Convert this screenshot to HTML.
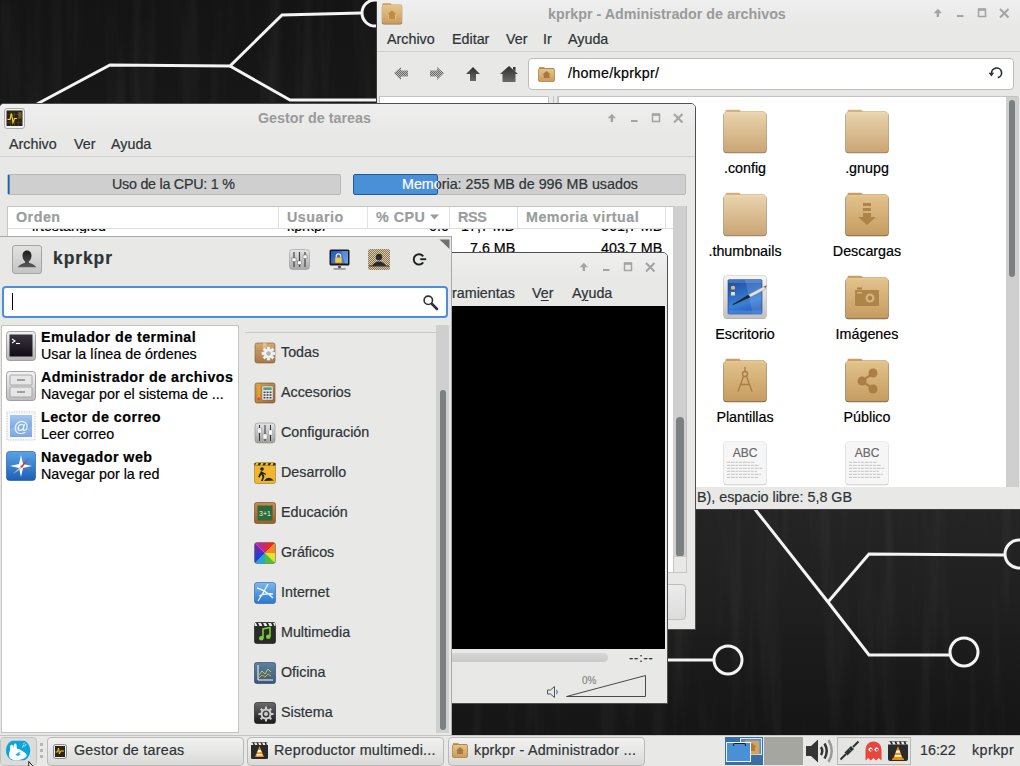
<!DOCTYPE html>
<html><head><meta charset="utf-8">
<style>
*{margin:0;padding:0;box-sizing:border-box}
html,body{width:1020px;height:766px;overflow:hidden;background:#1a1a1a}
body{position:relative;font-family:"Liberation Sans",sans-serif;font-size:14px;color:#2e3436}
.a{position:absolute}
.g{position:absolute;left:0;top:0;width:0;height:0}
.t{position:absolute;white-space:nowrap;line-height:1;-webkit-text-stroke:0.2px currentColor}
.ttl{position:absolute;font-weight:bold;color:#9a9a9a;font-size:14.3px;white-space:nowrap;line-height:1}
.menu{font-size:14.3px;color:#2e3436}
.th{font-size:14.3px;font-weight:bold;color:#9a9d9d;letter-spacing:0.5px}
.tb{background:linear-gradient(#f2f2f1,#dadad9);border:1px solid #b9b9b7;border-radius:4px}
.fl{font-size:14.3px;color:#000;transform:translateX(-50%)}
</style></head><body>
<!-- desktop background -->
<div class="a" style="left:0;top:0;width:1020px;height:766px;background:linear-gradient(180deg,#141414 0px,#171717 100px,#1e1e1e 300px,#242424 510px,#202020 600px,#181818 690px,#141414 766px)"></div>
<svg class="a" style="left:0;top:0" width="1020" height="766">
<filter id="wood" x="0" y="0" width="100%" height="100%"><feTurbulence type="fractalNoise" baseFrequency="0.06 0.004" numOctaves="3" seed="7"/><feColorMatrix type="matrix" values="0 0 0 0 1  0 0 0 0 1  0 0 0 0 1  1.2 0 0 0 -0.55"/></filter>
<rect width="1020" height="766" filter="url(#wood)" opacity="0.09"/>
</svg>
<svg class="a" style="left:0;top:0" width="1020" height="766">
<g fill="none" stroke="#f4f4f4" stroke-width="3">
<polyline points="37,104 110,65 230,66 282,15 361,13"/>
<polyline points="230,66 290,100 378,100"/>
<circle cx="375" cy="13" r="13"/>
<polyline points="754,508 828,602 869,655 950,655"/>
<polyline points="828,602 869,554 1005,555"/>
<circle cx="964" cy="652" r="14"/>
<circle cx="1019" cy="554" r="14"/>
<polyline points="660,660 714,660"/>
<circle cx="728" cy="660" r="14"/>
</g>
</svg>
<!-- THUNAR -->
<div class="g" id="thunar">
<div class="a" style="left:376px;top:-1px;width:646px;height:511px;background:#e8e8e7;border:1px solid #3c3c3c;border-radius:5px 5px 0 0"></div>
<div class="a" style="left:377px;top:0;width:644px;height:26px;background:linear-gradient(#efefef,#e8e8e7)"></div>
<svg class="a" style="left:381px;top:2px" width="22" height="23" viewBox="0 0 22 23">
 <defs><linearGradient id="hf" x1="0" y1="0" x2="0" y2="1"><stop offset="0" stop-color="#e4c690"/><stop offset="1" stop-color="#c99c58"/></linearGradient></defs>
 <path d="M1.5 2.2q0-1 1-1h7l1.2 1.2h8.8q1 0 1 1v3h-19z" fill="#c89a56"/>
 <rect x="0.8" y="3" width="20.4" height="19.5" rx="2.2" fill="#5e4a30" opacity="0.75"/>
 <rect x="1" y="2.8" width="20" height="19" rx="2" fill="url(#hf)"/>
 <path d="M11 7.2l-5.8 5.2h1.8v5.2h8v-5.2h1.8z" fill="#f0dcb0" opacity="0.6"/>
 <path d="M11 8l-4.8 4.3h1.6v5h6.4v-5h1.6z" fill="#bf8c40"/>
</svg>
<div class="ttl" style="left:548px;top:7px">kprkpr - Administrador de archivos</div>
<svg class="a" style="left:930px;top:6px" width="85" height="14" viewBox="0 0 85 14" fill="none" stroke="#a3a3a3" stroke-width="2">
 <path d="M3.7 7.2L7.85 2.8 12 7.2z" fill="#a3a3a3" stroke="none"/><path d="M7.85 6v5" stroke-width="2.4"/>
 <path d="M27 10h6.5"/>
 <rect x="48.5" y="3.5" width="7" height="7" stroke-width="1.5"/><path d="M48 3.5h8" stroke-width="2.5"/>
 <path d="M70 3l8.5 8.5M78.5 3l-8.5 8.5"/>
</svg>
<div class="t menu" style="left:387px;top:32px">Archivo</div>
<div class="t menu" style="left:452px;top:32px">Editar</div>
<div class="t menu" style="left:506px;top:32px">Ver</div>
<div class="t menu" style="left:543px;top:32px">Ir</div>
<div class="t menu" style="left:568px;top:32px">Ayuda</div>
<div class="a" style="left:377px;top:51px;width:644px;height:1px;background:#d0d0ce"></div>
<svg class="a" style="left:392px;top:64px" width="130" height="20" viewBox="0 0 130 20">
 <defs>
  <pattern id="dith" width="2" height="2" patternUnits="userSpaceOnUse"><rect width="1" height="1" fill="#6e6e6e"/><rect x="1" y="1" width="1" height="1" fill="#6e6e6e"/><rect x="1" width="1" height="1" fill="#b8b8b8"/><rect y="1" width="1" height="1" fill="#b8b8b8"/></pattern>
  <linearGradient id="dk" x1="0" y1="0" x2="0" y2="1"><stop offset="0" stop-color="#2e2e2e"/><stop offset="1" stop-color="#6a6a6a"/></linearGradient>
 </defs>
 <path d="M2 9l7-6v3.5h7v6h-7v3.5z" fill="url(#dith)"/>
 <path d="M52 9l-7-6v3.5h-7v6h7v3.5z" fill="url(#dith)"/>
 <path d="M81 3l7 7h-4v7h-6v-7h-4z" fill="url(#dk)"/>
 <path d="M117 2l9 8h-2.5v8h-13v-8h-2.5zM121 3h2.5v4.5l-2.5-2.2z" fill="url(#dk)"/>
</svg>
<div class="a" style="left:528px;top:58px;width:486px;height:32px;background:#fff;border:1px solid #c0bdb8;border-radius:4px"></div>
<svg class="a" style="left:538px;top:66px" width="17" height="16" viewBox="0 0 17 16">
 <path d="M1 1h5l1 1h9v13h-15z" fill="#c79a5c"/>
 <rect x="0.5" y="2.5" width="16" height="13" rx="1.5" fill="url(#hf)" stroke="#a8753a" stroke-width="0.7"/>
 <path d="M8.5 5l-4 3.5h1.2v3.5h5.6v-3.5h1.2z" fill="#9a6a2e" opacity="0.8"/>
</svg>
<div class="t" style="left:568px;top:66px;font-size:14.3px;color:#000;letter-spacing:0.3px">/home/kprkpr/</div>
<svg class="a" style="left:988px;top:66px" width="16" height="16" viewBox="0 0 16 16">
 <path d="M3.6 7.3A5 4.9 0 1 1 9.8 11.7" fill="none" stroke="#2e3436" stroke-width="1.7"/>
 <path d="M0.6 6.8h5.6l-2.8 3.6z" fill="#2e3436"/>
</svg>
<!-- sidebar & icon view -->
<div class="a" style="left:379px;top:96px;width:170px;height:420px;background:#fff;border:1px solid #c6c3bf"></div>
<div class="a" style="left:553px;top:96px;width:1px;height:391px;background:#c6c3bf"></div>
<div class="a" style="left:557px;top:96px;width:1px;height:391px;background:#c6c3bf"></div>
<div class="a" style="left:558px;top:96px;width:460px;height:392px;background:#fff;border:1px solid #c6c3bf"></div>
<div class="a" style="left:1006px;top:97px;width:13px;height:390px;background:#cfcfcf"></div>
<div class="a" style="left:1009px;top:100px;width:6px;height:177px;background:#7d8080;border-radius:4px"></div>
<svg class="a" style="left:0;top:0;width:0;height:0">
 <defs>
  <linearGradient id="fg" x1="0" y1="0" x2="0" y2="1"><stop offset="0" stop-color="#e9d4ad"/><stop offset="1" stop-color="#caa574"/></linearGradient>
  <linearGradient id="fg2" x1="0" y1="0" x2="0" y2="1"><stop offset="0" stop-color="#e2c28c"/><stop offset="1" stop-color="#c59c60"/></linearGradient>
  <symbol id="fold" viewBox="0 0 46 46">
   <path d="M3.5 3q0-1.3 1.3-1.3h12.5l1.5 1.5h22.5q1.3 0 1.3 1.3v5h-39z" fill="#d4b27c"/>
   <rect x="1.2" y="4.2" width="43.6" height="41" rx="3.5" fill="#6e5a40" opacity="0.75"/>
   <rect x="1.6" y="4" width="42.8" height="40.3" rx="3.2" fill="url(#fg)"/>
   <path d="M4 5h38" stroke="#f2e4c8" stroke-width="0.8" opacity="0.7"/>
  </symbol>
  <symbol id="fold2" viewBox="0 0 46 46">
   <path d="M3.5 3q0-1.3 1.3-1.3h12.5l1.5 1.5h22.5q1.3 0 1.3 1.3v5h-39z" fill="#c9a062"/>
   <rect x="1.2" y="4.2" width="43.6" height="41" rx="3.5" fill="#5e4628" opacity="0.8"/>
   <rect x="1.6" y="4" width="42.8" height="40.3" rx="3.2" fill="url(#fg2)"/>
   <path d="M4 5h38" stroke="#ecd3a8" stroke-width="0.8" opacity="0.7"/>
  </symbol>
  <symbol id="abc" viewBox="0 0 46 46">
   <rect x="1.5" y="2.3" width="43" height="43" rx="3.5" fill="#8a8a8a" opacity="0.6"/>
   <rect x="1.5" y="1.5" width="43" height="43" rx="3.5" fill="#f6f6f6" stroke="#e0e0e0" stroke-width="0.5"/>
   <text x="23" y="16.5" font-family="Liberation Sans" font-size="12" fill="#6a6a6a" text-anchor="middle" stroke="#6a6a6a" stroke-width="0.2">ABC</text>
   <g stroke="#bdbdbd" stroke-width="0.9" stroke-dasharray="3 0.8 4 0.8 2.5 0.8">
    <path d="M5 22.3h28M5 25.3h32M5 28.3h36M5 31.3h30M5 34.3h34M5 37.4h31"/>
   </g>
  </symbol>
 </defs>
</svg>
<!-- row 1 -->
<svg class="a" style="left:722px;top:108px" width="46" height="46"><use href="#fold"/></svg>
<svg class="a" style="left:844px;top:108px" width="46" height="46"><use href="#fold"/></svg>
<div class="t fl" style="left:745px;top:161px">.config</div>
<div class="t fl" style="left:867px;top:161px">.gnupg</div>
<!-- row 2 -->
<svg class="a" style="left:722px;top:191px" width="46" height="46"><use href="#fold"/></svg>
<svg class="a" style="left:844px;top:191px" width="46" height="46"><use href="#fold2"/>
 <g fill="#a97f45" opacity="0.9"><rect x="19" y="12" width="8" height="3"/><rect x="19" y="17" width="8" height="3"/><path d="M19 22h8v4h5l-9 8-9-8h5z"/></g></svg>
<div class="t fl" style="left:745px;top:244px">.thumbnails</div>
<div class="t fl" style="left:867px;top:244px">Descargas</div>
<!-- row 3 -->
<svg class="a" style="left:722px;top:274px" width="48" height="46" viewBox="0 0 48 46">
 <defs><linearGradient id="scr" x1="0" y1="0" x2="0.3" y2="1"><stop offset="0" stop-color="#1d4a9e"/><stop offset="0.75" stop-color="#3a80d8"/><stop offset="1" stop-color="#2a64c0"/></linearGradient>
 <linearGradient id="frm" x1="0" y1="0" x2="0" y2="1"><stop offset="0" stop-color="#f6f6f6"/><stop offset="1" stop-color="#c2c2c2"/></linearGradient></defs>
 <rect x="1.5" y="2" width="43" height="43" rx="3.5" fill="#6a6a6a" opacity="0.55"/>
 <rect x="1.5" y="1.5" width="43" height="42.5" rx="3.5" fill="url(#frm)" stroke="#c8c8c8" stroke-width="0.6"/>
 <rect x="6" y="5.7" width="34" height="34.3" rx="1" fill="url(#scr)" stroke="#1a3f80" stroke-width="0.6"/>
 <rect x="6.3" y="6" width="33.4" height="3" fill="#3c74c8"/>
 <path d="M23 6h16.7v34h-9z" fill="#fff" opacity="0.13"/>
 <rect x="9" y="12" width="4" height="3.5" rx="0.8" fill="#e8b850"/><rect x="9" y="18" width="4" height="3.5" fill="#ddd"/>
 <rect x="6.3" y="36.5" width="33.4" height="3.3" fill="#4a88dc" opacity="0.8"/>
 <path d="M10.5 30.3l16-9.6 2 2.4-17.2 7.8z" fill="#232323"/>
 <path d="M26.5 20.7l15.5-8.2 1.6 2.6-15.1 8z" fill="#e6e6e6" stroke="#888" stroke-width="0.4"/>
 <path d="M42 12.5l2.6-1.3-1 2.8z" fill="#555"/>
</svg>
<svg class="a" style="left:844px;top:274px" width="46" height="46"><use href="#fold2"/>
 <g fill="#a97f45" opacity="0.9"><rect x="11" y="16" width="24" height="16" rx="1"/></g><circle cx="26" cy="24" r="4.5" fill="#d5b27a"/><circle cx="26" cy="24" r="2.2" fill="#a97f45"/><rect x="13" y="13.5" width="5" height="2" fill="#a97f45"/><rect x="13" y="18" width="5" height="1.5" fill="#d5b27a"/></svg>
<div class="t fl" style="left:745px;top:327px">Escritorio</div>
<div class="t fl" style="left:867px;top:327px">Imágenes</div>
<!-- row 4 -->
<svg class="a" style="left:722px;top:357px" width="46" height="46"><use href="#fold2"/>
 <g stroke="#a97f45" stroke-width="1.4" fill="none"><circle cx="23" cy="17" r="2.5"/><path d="M23 10v4.5M21.5 19.5l-5.5 15M24.5 19.5l5.5 15M18 27.5h10"/></g></svg>
<svg class="a" style="left:844px;top:357px" width="46" height="46"><use href="#fold2"/>
 <g fill="#a97f45"><circle cx="29" cy="16" r="4.5"/><circle cx="18" cy="24" r="4.5"/><circle cx="29" cy="32" r="4.5"/><path d="M18 22.5l11-7.5 1 2-11 7.5zM18 25.5l11 7.5 1-2-11-7.5z"/></g></svg>
<div class="t fl" style="left:745px;top:410px">Plantillas</div>
<div class="t fl" style="left:867px;top:410px">Público</div>
<!-- row 5 -->
<svg class="a" style="left:722px;top:440px" width="46" height="46"><use href="#abc"/></svg>
<svg class="a" style="left:844px;top:440px" width="46" height="46"><use href="#abc"/></svg>
<!-- status bar -->
<div class="a" style="left:377px;top:487px;width:644px;height:22px;background:#e8e8e7"></div>
<div class="t" style="left:697px;top:490px;font-size:14.3px;color:#2e3436">B), espacio libre: 5,8 GB</div>
</div>
<!-- TASK MANAGER -->
<div class="g" id="tm">
<div class="a" style="left:-1px;top:103px;width:697px;height:527px;background:#e8e8e7;border:1px solid #4f4f4f;border-radius:5px 5px 0 0"></div>
<div class="a" style="left:0;top:104px;width:695px;height:28px;background:linear-gradient(#efefef,#e8e8e7);border-radius:4px 4px 0 0"></div>
<svg class="a" style="left:4px;top:108px" width="21" height="21" viewBox="0 0 21 21">
 <rect x="0.5" y="0.5" width="20" height="20" rx="2.5" fill="#f2f2f2" stroke="#9a9a9a" stroke-width="0.8"/>
 <rect x="2.5" y="2.5" width="16" height="15.5" fill="#2b2416"/>
 <g stroke="#5a4c2a" stroke-width="0.5"><path d="M2.5 6.5h16M2.5 10.5h16M2.5 14.5h16M6.5 2.5v15.5M10.5 2.5v15.5M14.5 2.5v15.5"/></g>
 <path d="M3.5 11.5h2.5l1.5-6 1.5 9 1.5-4h2.5" fill="none" stroke="#f5d02c" stroke-width="1.2"/>
 <path d="M14.5 5h3M14.5 7h3M14.5 9h3" stroke="#d4b030" stroke-width="0.8"/>
</svg>
<div class="ttl" style="left:258px;top:111px">Gestor de tareas</div>
<svg class="a" style="left:604px;top:111px" width="85" height="14" viewBox="0 0 85 14" fill="none" stroke="#a3a3a3" stroke-width="2">
 <path d="M3.7 7.2L7.85 2.8 12 7.2z" fill="#a3a3a3" stroke="none"/><path d="M7.85 6v5" stroke-width="2.4"/>
 <path d="M27 10h6.5"/>
 <rect x="48.5" y="3.5" width="7" height="7" stroke-width="1.5"/><path d="M48 3.5h8" stroke-width="2.5"/>
 <path d="M70 3l8.5 8.5M78.5 3l-8.5 8.5"/>
</svg>
<div class="t menu" style="left:9px;top:137px">Archivo</div>
<div class="t menu" style="left:74px;top:137px">Ver</div>
<div class="t menu" style="left:111px;top:137px">Ayuda</div>
<div class="a" style="left:0;top:156px;width:695px;height:1px;background:#d3d3d1"></div>
<!-- cpu bar -->
<div class="a" style="left:7px;top:174px;width:334px;height:21px;background:#cfcfcf;border:1px solid #b9b9b7;border-radius:2px"></div>
<div class="a" style="left:8px;top:175px;width:2px;height:19px;background:#4a90d9;border-left:1px solid #1f5fa3"></div>
<div class="t" style="left:112px;top:177px;font-size:14.3px;color:#2e3436;letter-spacing:-0.25px">Uso de la CPU: 1 %</div>
<!-- mem bar -->
<div class="a" style="left:353px;top:174px;width:333px;height:21px;background:#cfcfcf;border:1px solid #b9b9b7;border-radius:2px"></div>
<div class="t" style="left:402px;top:177px;font-size:14.3px;color:#2e3436">Memoria: 255 MB de 996 MB usados</div>
<div class="a" style="left:353px;top:174px;width:85px;height:21px;overflow:hidden;border-radius:2px">
 <div class="a" style="left:0;top:0;width:85px;height:21px;background:#4a90d9;border:1px solid #1e5a9c;border-radius:2px"></div>
 <div class="t" style="left:49px;top:3px;font-size:14.3px;color:#fff">Memoria: 255 MB de 996 MB usados</div>
</div>
<!-- table -->
<div class="a" style="left:7px;top:206px;width:667px;height:367px;background:#fff;border:1px solid #c8c6c2;border-right:none"></div>
<div class="a" style="left:8px;top:207px;width:665px;height:22px;background:#fff;border-bottom:1px solid #dcdcdc"></div>
<div class="a" style="left:278px;top:207px;width:1px;height:21px;background:#e2e2e2"></div>
<div class="a" style="left:367px;top:207px;width:1px;height:21px;background:#e2e2e2"></div>
<div class="a" style="left:449px;top:207px;width:1px;height:21px;background:#e2e2e2"></div>
<div class="a" style="left:517px;top:207px;width:1px;height:21px;background:#e2e2e2"></div>
<div class="a" style="left:665px;top:207px;width:1px;height:21px;background:#e2e2e2"></div>
<div class="t th" style="left:16px;top:210px">Orden</div>
<div class="t th" style="left:287px;top:210px">Usuario</div>
<div class="t th" style="left:376px;top:210px">% CPU</div>
<svg class="a" style="left:430px;top:214px" width="10" height="7"><path d="M0 0.5h9l-4.5 5z" fill="#9b9b9b"/></svg>
<div class="t th" style="left:458px;top:210px;letter-spacing:-0.3px">RSS</div>
<div class="t th" style="left:526px;top:210px">Memoria virtual</div>
<!-- hidden row bottom -->
<div class="a" style="left:8px;top:229px;width:665px;height:4px;overflow:hidden">
 <div class="t" style="left:24px;top:-10px;font-size:14.3px;color:#000">irtestangled</div>
 <div class="t" style="left:279px;top:-10px;font-size:14.3px;color:#000">kprkpr</div>
 <div class="t" style="left:421px;top:-10px;font-size:14.3px;color:#000">0.0</div>
 <div class="t" style="left:453px;top:-10px;font-size:14.3px;color:#000">17,7 MB</div>
 <div class="t" style="left:593px;top:-10px;font-size:14.3px;color:#000">561,7 MB</div>
</div>
<div class="a" style="left:8px;top:236px;width:665px;height:17px;overflow:hidden">
 <div class="t" style="left:462px;top:5px;font-size:14.3px;color:#000">7.6 MB</div>
 <div class="t" style="left:593px;top:5px;font-size:14.3px;color:#000">403.7 MB</div>
</div>
<!-- scrollbar -->
<div class="a" style="left:673px;top:206px;width:14px;height:367px;background:#cfcfcf;border-right:1px solid #c0c0c0"></div>
<div class="a" style="left:676px;top:417px;width:8px;height:140px;background:#7d8080;border-radius:4px"></div>
<div class="a" style="left:673px;top:556px;width:14px;height:17px;background:#e8e8e7;border:1px solid #c8c6c2"></div>
<!-- button -->
<div class="a" style="left:600px;top:584px;width:86px;height:36px;background:linear-gradient(#ececec,#dcdcdc);border:1px solid #bdbdbd;border-radius:4px"></div>
</div>
<!-- VLC -->
<div class="g" id="vlc">
<div class="a" style="left:400px;top:252px;width:268px;height:452px;background:#e8e8e7;border:1px solid #4f4f4f;border-radius:5px 5px 0 0"></div>
<div class="a" style="left:401px;top:253px;width:266px;height:27px;background:linear-gradient(#efefef,#e8e8e7);border-radius:4px 4px 0 0"></div>
<svg class="a" style="left:576px;top:260px" width="85" height="14" viewBox="0 0 85 14" fill="none" stroke="#a3a3a3" stroke-width="2">
 <path d="M3.7 7.2L7.85 2.8 12 7.2z" fill="#a3a3a3" stroke="none"/><path d="M7.85 6v5" stroke-width="2.4"/>
 <path d="M27 10h6.5"/>
 <rect x="48.5" y="3.5" width="7" height="7" stroke-width="1.5"/><path d="M48 3.5h8" stroke-width="2.5"/>
 <path d="M70 3l8.5 8.5M78.5 3l-8.5 8.5"/>
</svg>
<div class="t menu" style="left:429px;top:286px">Herramientas</div>
<div class="t menu" style="left:532px;top:286px">V<u style="text-underline-offset:2px">e</u>r</div>
<div class="t menu" style="left:572px;top:286px">A<u style="text-underline-offset:2px">y</u>uda</div>
<div class="a" style="left:401px;top:306px;width:264px;height:343px;background:#000"></div>
<div class="a" style="left:420px;top:653px;width:188px;height:9px;background:linear-gradient(#d6d6d6,#c9c9c9);border-radius:0 5px 5px 0"></div>
<div class="t" style="left:629px;top:652px;font-size:12.5px;color:#2e3436;letter-spacing:0.9px">--:--</div>
<svg class="a" style="left:546px;top:685px" width="14" height="14" viewBox="0 0 14 14">
 <path d="M1.5 5h3l4-3.5v11l-4-3.5h-3z" fill="#e8e8e8" stroke="#555" stroke-width="1"/>
 <path d="M10.5 5q1.5 2 0 4" fill="none" stroke="#3b78c8" stroke-width="1.2"/>
</svg>
<svg class="a" style="left:564px;top:673px" width="84" height="26" viewBox="0 0 84 26">
 <path d="M2.5 23.5L81.5 2.5V23.5z" fill="none" stroke="#4a4a4a" stroke-width="1" stroke-linejoin="round"/>
</svg>
<div class="t" style="left:582px;top:676px;font-size:10px;color:#8a8a8a">0%</div>
</div>
<!-- WHISKER MENU -->
<div class="g" id="wm">
<div class="a" style="left:0;top:236px;width:452px;height:500px;background:#e8e8e7;border:1px solid #a9a9a9;border-left:none"></div>
<svg class="a" style="left:439px;top:239px" width="11" height="10"><path d="M0.5 0.5h10v9.5z" fill="#6f6f6f"/></svg>
<!-- avatar -->
<svg class="a" style="left:12px;top:245px" width="30" height="29" viewBox="0 0 30 29">
 <defs><linearGradient id="av" x1="0" y1="0" x2="0" y2="1"><stop offset="0" stop-color="#e2e2e2"/><stop offset="1" stop-color="#c4c4c4"/></linearGradient>
 <linearGradient id="avp" x1="0" y1="0" x2="0" y2="1"><stop offset="0" stop-color="#1c1c1c"/><stop offset="1" stop-color="#5a5a5a"/></linearGradient></defs>
 <rect x="0.5" y="0.5" width="29" height="28" rx="2.5" fill="url(#av)" stroke="#a5a5a5" stroke-width="1"/>
 <path d="M15 5.5c-3 0-4.5 2.3-4.5 5.3 0 2.6 1.2 4.6 2.6 5.6v1.3c-3 .8-6 2.3-7.5 4.6h18.8c-1.5-2.3-4.5-3.8-7.5-4.6v-1.3c1.4-1 2.6-3 2.6-5.6 0-3-1.5-5.3-4.5-5.3z" fill="url(#avp)"/>
</svg>
<div class="t" style="left:53px;top:250px;font-size:17.5px;font-weight:bold;color:#2e3436;letter-spacing:0.9px">kprkpr</div>
<!-- settings -->
<svg class="a" style="left:289px;top:249px" width="21" height="21" viewBox="0 0 21 21">
 <defs><linearGradient id="st" x1="0" y1="0" x2="0" y2="1"><stop offset="0" stop-color="#e6e6e6"/><stop offset="1" stop-color="#a8a8a8"/></linearGradient></defs>
 <rect x="0.5" y="0.5" width="20" height="20" rx="3" fill="url(#st)" stroke="#9a9a9a" stroke-width="0.6"/>
 <path d="M5 3v15M10.5 3v15M16 3v15" stroke="#444" stroke-width="1.2"/>
 <rect x="3" y="9" width="4" height="3.5" fill="#fff" stroke="#666" stroke-width="0.5"/>
 <rect x="8.5" y="12" width="4" height="3.5" fill="#fff" stroke="#666" stroke-width="0.5"/>
 <rect x="14" y="6" width="4" height="3.5" fill="#fff" stroke="#666" stroke-width="0.5"/>
</svg>
<!-- lock -->
<svg class="a" style="left:329px;top:249px" width="21" height="21" viewBox="0 0 21 21">
 <defs><linearGradient id="lk" x1="0" y1="0" x2="1" y2="1"><stop offset="0" stop-color="#1f56c0"/><stop offset="1" stop-color="#4f8de0"/></linearGradient></defs>
 <rect x="0.5" y="0.5" width="20" height="16" rx="1.5" fill="#1a1a1a"/>
 <rect x="2" y="2" width="17" height="12.5" fill="url(#lk)"/>
 <path d="M12 2h7v12.5h-3z" fill="#fff" opacity="0.18"/>
 <rect x="6" y="8.5" width="7" height="5.5" fill="#f2c94c" stroke="#a07a1a" stroke-width="0.5"/>
 <path d="M7.3 8.5V7a2.2 2.2 0 0 1 4.4 0v1.5" fill="none" stroke="#e8e8e8" stroke-width="1.2"/>
 <path d="M9 17h3v2h-3z" fill="#555"/><rect x="4.5" y="19" width="12" height="1.8" fill="#9a9a9a"/>
</svg>
<!-- switch user dithered -->
<svg class="a" style="left:368px;top:249px" width="22" height="21" viewBox="0 0 22 21">
 <defs><pattern id="dth2" width="2" height="2" patternUnits="userSpaceOnUse"><rect width="2" height="2" fill="#d8c8a8"/><rect width="1" height="1" fill="#8a7858"/><rect x="1" y="1" width="1" height="1" fill="#8a7858"/></pattern></defs>
 <rect x="0" y="0" width="22" height="21" rx="2" fill="url(#dth2)"/>
 <circle cx="11" cy="8" r="3.2" fill="#2a2a2a"/><path d="M4 17c1.5-3 4-4.5 7-4.5s5.5 1.5 7 4.5z" fill="#2a2a2a"/>
 <path d="M1 17h20" stroke="#333" stroke-width="1"/>
</svg>
<!-- logout -->
<svg class="a" style="left:412px;top:253px" width="15" height="13" viewBox="0 0 15 13">
 <path d="M11.2 3.4A5.2 5.2 0 1 0 11.2 9.4" fill="none" stroke="#1e2426" stroke-width="1.9"/>
 <path d="M8.2 6.2h6" stroke="#1e2426" stroke-width="1.9"/>
</svg>
<!-- search -->
<div class="a" style="left:2px;top:286px;width:446px;height:32px;background:#fff;border:2px solid #4a90d9;border-radius:4px"></div>
<div class="a" style="left:12px;top:293px;width:1px;height:17px;background:#000"></div>
<svg class="a" style="left:422px;top:294px" width="17" height="17" viewBox="0 0 17 17">
 <circle cx="6.3" cy="6.3" r="4.2" fill="none" stroke="#2e3436" stroke-width="1.6"/>
 <path d="M10 10l5 5" stroke="#2e3436" stroke-width="2.6" stroke-linecap="round"/>
</svg>
<!-- app list -->
<div class="a" style="left:1px;top:325px;width:238px;height:408px;background:#fff;border:1px solid #c6c3bf"></div>
<svg class="a" style="left:6px;top:331px" width="30" height="30" viewBox="0 0 30 30">
 <defs><linearGradient id="tf" x1="0" y1="0" x2="0" y2="1"><stop offset="0" stop-color="#f2f2f2"/><stop offset="1" stop-color="#b5b5b5"/></linearGradient>
 <linearGradient id="tb" x1="0" y1="0" x2="0" y2="1"><stop offset="0" stop-color="#3a3340"/><stop offset="1" stop-color="#100d14"/></linearGradient></defs>
 <rect x="0.5" y="0.5" width="29" height="29" rx="3" fill="url(#tf)" stroke="#8f8f8f" stroke-width="0.8"/>
 <rect x="3.5" y="3.5" width="23" height="22" fill="url(#tb)"/>
 <path d="M6 8l3 2-3 2" fill="none" stroke="#fff" stroke-width="1.1"/><path d="M10 12.5h4" stroke="#fff" stroke-width="1.1"/>
</svg>
<svg class="a" style="left:6px;top:371px" width="30" height="30" viewBox="0 0 30 30">
 <defs><linearGradient id="cab" x1="0" y1="0" x2="0" y2="1"><stop offset="0" stop-color="#f4f4f4"/><stop offset="1" stop-color="#bdbdbd"/></linearGradient></defs>
 <rect x="0.5" y="0.5" width="29" height="29" rx="3" fill="url(#cab)" stroke="#8f8f8f" stroke-width="0.8"/>
 <rect x="4" y="4" width="22" height="10" rx="1" fill="#e6e6e6" stroke="#9a9a9a" stroke-width="0.8"/>
 <rect x="4" y="16" width="22" height="10" rx="1" fill="#e6e6e6" stroke="#9a9a9a" stroke-width="0.8"/>
 <path d="M11 9h8M11 21h8" stroke="#888" stroke-width="1.3"/>
</svg>
<svg class="a" style="left:6px;top:411px" width="30" height="30" viewBox="0 0 30 30">
 <defs><linearGradient id="ml" x1="0" y1="0" x2="0" y2="1"><stop offset="0" stop-color="#a6c8f0"/><stop offset="1" stop-color="#5a90d8"/></linearGradient></defs>
 <rect x="1" y="1" width="28" height="28" fill="#f8f8f8"/>
 <rect x="1" y="1" width="28" height="28" fill="none" stroke="#d6d6d6" stroke-width="1.6" stroke-dasharray="0.1 2.4" stroke-linecap="round"/>
 <rect x="4" y="4" width="22" height="22" fill="url(#ml)"/>
 <path d="M4 18q5-4 11-1 6 2 11-2v11h-22z" fill="#fff" opacity="0.2"/>
 <text x="15" y="20.5" font-family="Liberation Sans" font-size="15" fill="#f4f8fc" text-anchor="middle">@</text>
</svg>
<svg class="a" style="left:6px;top:451px" width="30" height="30" viewBox="0 0 30 30">
 <defs><linearGradient id="nv" x1="0" y1="0" x2="0" y2="1"><stop offset="0" stop-color="#5aa3e8"/><stop offset="1" stop-color="#1b5fb5"/></linearGradient></defs>
 <rect x="0.5" y="0.5" width="29" height="29" rx="3" fill="url(#nv)" stroke="#1a4f96" stroke-width="0.6"/>
 <path d="M15 4l2 9 9 2-9 2-2 9-2-9-9-2 9-2z" fill="#fff"/>
 <path d="M23 7l-9 9 2 1z" fill="#e03030"/><path d="M7 23l7-7 2 1z" fill="#ccc"/>
</svg>
<div class="t" style="left:41px;top:330px;font-size:14.3px;font-weight:bold;color:#000;letter-spacing:0.45px">Emulador de terminal</div>
<div class="t" style="left:41px;top:347px;font-size:14.3px;color:#000">Usar la línea de órdenes</div>
<div class="t" style="left:41px;top:370px;font-size:14.3px;font-weight:bold;color:#000;letter-spacing:0.45px">Administrador de archivos</div>
<div class="t" style="left:41px;top:387px;font-size:14.3px;color:#000">Navegar por el sistema de ...</div>
<div class="t" style="left:41px;top:410px;font-size:14.3px;font-weight:bold;color:#000;letter-spacing:0.45px">Lector de correo</div>
<div class="t" style="left:41px;top:427px;font-size:14.3px;color:#000">Leer correo</div>
<div class="t" style="left:41px;top:450px;font-size:14.3px;font-weight:bold;color:#000;letter-spacing:0.45px">Navegador web</div>
<div class="t" style="left:41px;top:467px;font-size:14.3px;color:#000">Navegar por la red</div>
<!-- categories -->
<div class="a" style="left:245px;top:332px;width:191px;height:1px;background:#c8c8c8"></div>
<div class="a" style="left:436px;top:325px;width:13px;height:408px;background:#cfcfcf"></div>
<div class="a" style="left:440px;top:390px;width:6px;height:340px;background:#7d8080;border-radius:3px"></div>
<svg class="a" style="left:254px;top:342px" width="22" height="22" viewBox="0 0 22 22"><defs><linearGradient id="ca0" x1="0" y1="0" x2="0" y2="1"><stop offset="0" stop-color="#d6a86c"/><stop offset="1" stop-color="#a87844"/></linearGradient></defs>
<rect x="1" y="1" width="20" height="20" rx="2" fill="url(#ca0)" stroke="#7d5a30" stroke-width="0.6"/><path d="M9 1h3.5v9h-3.5z" fill="#e6c89a" opacity="0.8"/><path d="M1 8.5h20" stroke="#b8875a" stroke-width="0.6"/>
<g transform="translate(14.5,11.5)" fill="#f2f2f2" stroke="#9a9a9a" stroke-width="0.4"><circle r="5"/><g><rect x="-1.6" y="-7" width="3.2" height="3"/><rect x="-1.6" y="4" width="3.2" height="3"/><rect x="-7" y="-1.6" width="3" height="3.2"/><rect x="4" y="-1.6" width="3" height="3.2"/><rect x="-1.6" y="-7" width="3.2" height="3" transform="rotate(45)"/><rect x="-1.6" y="4" width="3.2" height="3" transform="rotate(45)"/><rect x="-7" y="-1.6" width="3" height="3.2" transform="rotate(45)"/><rect x="4" y="-1.6" width="3" height="3.2" transform="rotate(45)"/></g><circle r="4.6" stroke="none"/><circle r="2" fill="#b5b5b5"/></g></svg>
<div class="t" style="left:281px;top:345px;font-size:14.3px;color:#2e3436">Todas</div>
<svg class="a" style="left:254px;top:382px" width="22" height="22" viewBox="0 0 22 22"><defs><linearGradient id="ca1" x1="0" y1="0" x2="1" y2="1"><stop offset="0" stop-color="#d4a060"/><stop offset="1" stop-color="#9c6a36"/></linearGradient></defs>
<rect x="1" y="1" width="20" height="20" rx="2" fill="url(#ca1)" stroke="#6d4a25" stroke-width="0.6"/>
<path d="M3.5 4l1.3-2 1.3 2v13h-2.6z" fill="#f0a020"/><rect x="3.5" y="15.5" width="2.6" height="2.5" fill="#e04848"/>
<rect x="8" y="4" width="11" height="14" rx="1" fill="#eeeeee" stroke="#6a6a6a" stroke-width="0.5"/><rect x="9.3" y="5.3" width="8.4" height="2.8" fill="#5c9a7c"/>
<g fill="#444"><rect x="9.5" y="9.5" width="2" height="1.6"/><rect x="12.5" y="9.5" width="2" height="1.6"/><rect x="15.5" y="9.5" width="2" height="1.6"/><rect x="9.5" y="12.2" width="2" height="1.6"/><rect x="12.5" y="12.2" width="2" height="1.6"/><rect x="15.5" y="12.2" width="2" height="1.6"/><rect x="9.5" y="14.9" width="2" height="1.6"/><rect x="12.5" y="14.9" width="2" height="1.6"/><rect x="15.5" y="14.9" width="2" height="1.6"/></g></svg>
<div class="t" style="left:281px;top:385px;font-size:14.3px;color:#2e3436">Accesorios</div>
<svg class="a" style="left:254px;top:422px" width="22" height="22" viewBox="0 0 22 22"><defs><linearGradient id="ca2" x1="0" y1="0" x2="0" y2="1"><stop offset="0" stop-color="#e4e4e4"/><stop offset="1" stop-color="#a0a0a0"/></linearGradient></defs>
<rect x="1" y="1" width="20" height="20" rx="3" fill="url(#ca2)" stroke="#8a8a8a" stroke-width="0.6"/>
<path d="M5.5 3v16M11 3v16M16.5 3v16" stroke="#333" stroke-width="1"/>
<rect x="3.5" y="6" width="4" height="5" rx="0.5" fill="#fafafa" stroke="#777" stroke-width="0.4"/><rect x="9" y="12" width="4" height="5" rx="0.5" fill="#fafafa" stroke="#777" stroke-width="0.4"/><rect x="14.5" y="8" width="4" height="5" rx="0.5" fill="#fafafa" stroke="#777" stroke-width="0.4"/></svg>
<div class="t" style="left:281px;top:425px;font-size:14.3px;color:#2e3436">Configuración</div>
<svg class="a" style="left:254px;top:462px" width="22" height="22" viewBox="0 0 22 22"><rect x="0.5" y="0.5" width="21" height="21" rx="2" fill="#efb52e" stroke="#a07a10" stroke-width="0.6"/>
<path d="M0.5 1h21v2.5h-21z" fill="#2a2a2a"/><path d="M2 1h2.5l-1 2.5h-2.5zM7 1h2.5l-1 2.5h-2.5zM12 1h2.5l-1 2.5h-2.5zM17 1h2.5l-1 2.5h-2.5z" fill="#f0c020"/>
<circle cx="8" cy="7" r="1.8" fill="#222"/><path d="M7 9l-3 6 1.5 0.5 2-3 1 2.5-1.5 4h1.8l1.6-4.5-1.2-3 2 1.5 1-1z" fill="#222"/><path d="M10 19q4-6 10-0.5z" fill="#222"/></svg>
<div class="t" style="left:281px;top:465px;font-size:14.3px;color:#2e3436">Desarrollo</div>
<svg class="a" style="left:254px;top:502px" width="22" height="22" viewBox="0 0 22 22"><defs><linearGradient id="ca4" x1="0" y1="0" x2="0" y2="1"><stop offset="0" stop-color="#c88a50"/><stop offset="1" stop-color="#96602e"/></linearGradient></defs>
<rect x="0.5" y="0.5" width="21" height="21" rx="2" fill="url(#ca4)" stroke="#6d4522" stroke-width="0.6"/>
<rect x="3.5" y="3.5" width="15" height="15" fill="#2f6b3a"/><text x="11" y="14" font-family="Liberation Sans" font-size="7" fill="#e0f0e0" text-anchor="middle">3+1</text></svg>
<div class="t" style="left:281px;top:505px;font-size:14.3px;color:#2e3436">Educación</div>
<svg class="a" style="left:254px;top:542px" width="22" height="22" viewBox="0 0 22 22"><defs><clipPath id="gcp"><rect x="0.5" y="0.5" width="21" height="21" rx="2.5"/></clipPath></defs>
<g clip-path="url(#gcp)"><path d="M11 11L11 -4 26 -4z" fill="#e82828"/><path d="M11 11L26 -4 26 11z" fill="#f08a20"/><path d="M11 11L26 11 26 26z" fill="#e8e030"/><path d="M11 11L26 26 11 26z" fill="#50c030"/><path d="M11 11L11 26 -4 26z" fill="#20a8d8"/><path d="M11 11L-4 26 -4 11z" fill="#2040d0"/><path d="M11 11L-4 11 -4 -4z" fill="#6a28b8"/><path d="M11 11L-4 -4 11 -4z" fill="#c02890"/></g>
<rect x="0.5" y="0.5" width="21" height="21" rx="2.5" fill="none" stroke="#555" stroke-width="0.5"/></svg>
<div class="t" style="left:281px;top:545px;font-size:14.3px;color:#2e3436">Gráficos</div>
<svg class="a" style="left:254px;top:582px" width="22" height="22" viewBox="0 0 22 22"><defs><linearGradient id="ca6" x1="0" y1="0" x2="0" y2="1"><stop offset="0" stop-color="#7ab8f0"/><stop offset="1" stop-color="#2a78d0"/></linearGradient></defs>
<rect x="0.5" y="0.5" width="21" height="21" rx="2.5" fill="url(#ca6)" stroke="#2a5ea0" stroke-width="0.6"/>
<path d="M3 6q8 2 16 10M14 2q-4 8-10 17M5 14q6-3 14-2" fill="none" stroke="#fff" stroke-width="1.3" opacity="0.9"/></svg>
<div class="t" style="left:281px;top:585px;font-size:14.3px;color:#2e3436">Internet</div>
<svg class="a" style="left:254px;top:622px" width="22" height="22" viewBox="0 0 22 22"><rect x="0.5" y="0.5" width="21" height="21" rx="2" fill="#2a2a2a" stroke="#111" stroke-width="0.6"/>
<path d="M0.5 1h21v3h-21z" fill="#e8e8e8"/><path d="M2 1h2l1.5 3h-2zM7 1h2l1.5 3h-2zM12 1h2l1.5 3h-2zM17 1h2l1.5 3h-2z" fill="#222"/>
<path d="M9 16V7l7-1.5v9" fill="none" stroke="#7ad030" stroke-width="1.6"/><circle cx="7.3" cy="16.2" r="2.3" fill="#7ad030"/><circle cx="14.3" cy="14.7" r="2.3" fill="#7ad030"/></svg>
<div class="t" style="left:281px;top:625px;font-size:14.3px;color:#2e3436">Multimedia</div>
<svg class="a" style="left:254px;top:662px" width="22" height="22" viewBox="0 0 22 22"><defs><linearGradient id="ca8" x1="0" y1="0" x2="0" y2="1"><stop offset="0" stop-color="#5f7fa0"/><stop offset="1" stop-color="#3a5878"/></linearGradient></defs>
<rect x="0.5" y="0.5" width="21" height="21" rx="2" fill="url(#ca8)" stroke="#2a4058" stroke-width="0.6"/>
<path d="M4 3v15h15" fill="none" stroke="#fff" stroke-width="1"/><path d="M5 13l3-4 3 3 3-5 3 3" fill="none" stroke="#a0e040" stroke-width="1"/><path d="M5 16l3-3 3 2 3-3 3 2" fill="none" stroke="#f0a020" stroke-width="1"/></svg>
<div class="t" style="left:281px;top:665px;font-size:14.3px;color:#2e3436">Oficina</div>
<svg class="a" style="left:254px;top:702px" width="22" height="22" viewBox="0 0 22 22"><defs><linearGradient id="ca9" x1="0" y1="0" x2="0" y2="1"><stop offset="0" stop-color="#6a6a6a"/><stop offset="1" stop-color="#1a1a1a"/></linearGradient></defs>
<rect x="0.5" y="0.5" width="21" height="21" rx="2.5" fill="url(#ca9)" stroke="#111" stroke-width="0.6"/>
<g transform="translate(12,12)" fill="none" stroke="#cfcfcf" stroke-width="2"><circle r="4.5"/><path d="M0 -7.5v3M0 4.5v3M-7.5 0h3M4.5 0h3M-5.3 -5.3l2 2M3.3 3.3l2 2M-5.3 5.3l2 -2M3.3 -3.3l2 -2"/></g><circle cx="12" cy="12" r="2" fill="#cfcfcf"/></svg>
<div class="t" style="left:281px;top:705px;font-size:14.3px;color:#2e3436">Sistema</div>
</div>
<!-- PANEL -->
<div class="g" id="panel">
<div class="a" style="left:0;top:735px;width:1020px;height:31px;background:#e8e8e7;border-top:1px solid #c4c4c2"></div>
<div class="a" style="left:0;top:737px;width:37px;height:29px;background:#dcdcdb;border:1px solid #c2c2c0;border-radius:4px"></div>
<svg class="a" style="left:6px;top:740px" width="25" height="21" viewBox="0 0 25 21">
 <defs><clipPath id="xc"><rect x="0" y="0.8" width="25" height="19.4"/></clipPath></defs>
 <ellipse cx="12.1" cy="10.5" rx="12.1" ry="11.6" fill="#0aa5dc" clip-path="url(#xc)"/>
 <path d="M4.2 9.5q-0.6-4.5 1.2-4.8 1.6-.2 2 3.2 0-4.2 1.8-4.3 1.8 0 1.5 4.8 3.5.6 6.5 3 3.2 1.4 3.6 3.8-.4 2.5-5 4-5 1.8-9 .6-3.6-1-3.8-4.5 0-3.2 1.2-5.8z" fill="#fff"/>
 <path d="M9.5 14.5l3-2.2 2.2.3-1.5 1.5 1.8.2-3.2 2z" fill="#0aa5dc" opacity="0.85"/>
 <path d="M16.5 7.5l1.2-2.8M18.5 6.5l1.6-2.5M17.6 4.2l.8-1.6" stroke="#fff" stroke-width="0.9" opacity="0.85"/>
</svg>
<div class="a" style="left:40px;top:743px;width:3px;height:3px;background:#b5b5b5"></div>
<div class="a" style="left:40px;top:749px;width:3px;height:3px;background:#b5b5b5"></div>
<div class="a" style="left:40px;top:755px;width:3px;height:3px;background:#b5b5b5"></div>
<!-- task buttons -->
<div class="a tb" style="left:47px;top:737px;width:197px;height:29px"></div>
<div class="a tb" style="left:247px;top:737px;width:197px;height:29px"></div>
<div class="a tb" style="left:448px;top:737px;width:197px;height:29px"></div>
<svg class="a" style="left:53px;top:744px" width="14" height="15" viewBox="0 0 14 15">
 <rect x="0.5" y="0.5" width="13" height="14" rx="2" fill="#ececec" stroke="#666" stroke-width="0.7"/>
 <rect x="2" y="2" width="10" height="11" fill="#2b2416"/>
 <path d="M2.5 8h2l1-4 1 6 1-3h3.5" fill="none" stroke="#f5d02c" stroke-width="1"/>
</svg>
<div class="t" style="left:74px;top:743px;font-size:14.3px;color:#2e3436;letter-spacing:0.25px">Gestor de tareas</div>
<svg class="a" style="left:251px;top:742px" width="17" height="17" viewBox="0 0 17 17">
 <rect x="0" y="0" width="17" height="17" rx="1.5" fill="#2a2a2a"/>
 <path d="M0 0.5h17v2.5h-17z" fill="#e8e8e8"/><path d="M1.5 0.5h1.5l1 2.5h-1.5zM5.5 0.5h1.5l1 2.5h-1.5zM9.5 0.5h1.5l1 2.5h-1.5zM13.5 0.5h1.5l1 2.5h-1.5z" fill="#222"/>
 <path d="M8.5 4l4.5 11h-9z" fill="#f08a10"/><path d="M7.2 8h2.6l.8 2.2h-4.2zM6 12h5l.6 1.5h-6.2z" fill="#fff"/>
</svg>
<div class="t" style="left:274px;top:743px;font-size:14.3px;color:#2e3436;letter-spacing:0.25px">Reproductor multimedi...</div>
<svg class="a" style="left:452px;top:742px" width="16" height="16" viewBox="0 0 16 16">
 <path d="M1 1h5l1 1h8v13h-14z" fill="#c79a5c"/>
 <rect x="0.5" y="2.5" width="15" height="13" rx="1.5" fill="url(#hf)" stroke="#a8753a" stroke-width="0.7"/>
 <path d="M8 5l-4 3.5h1.2v3.5h5.6v-3.5h1.2z" fill="#9a6a2e" opacity="0.8"/>
</svg>
<div class="t" style="left:474px;top:743px;font-size:14.3px;color:#2e3436;letter-spacing:0.25px">kprkpr - Administrador ...</div>
<!-- pager -->
<div class="a" style="left:725px;top:737px;width:38px;height:28px;background:#3b6ea5"></div>
<div class="a" style="left:740px;top:738px;width:22px;height:17px;background:#4a90d9;border:1px solid #dfe8f2"></div>
<svg class="a" style="left:744px;top:739px" width="16" height="16" viewBox="0 0 16 16">
 <rect x="0.5" y="1.5" width="15" height="14" rx="1.5" fill="#d3a460"/><path d="M8 4l-4.5 4h1.5v4h6v-4h1.5z" fill="#a47432" opacity="0.8"/>
</svg>
<div class="a" style="left:726px;top:742px;width:25px;height:20px;background:#4a90d9;border:1px solid #f2f6fa"></div>
<div class="a" style="left:733px;top:743px;width:13px;height:3px;border:1.5px solid #1c1c1c;border-bottom:none;border-radius:2px 2px 0 0"></div>
<div class="a" style="left:764px;top:737px;width:39px;height:28px;background:#a5a6a0"></div>
<!-- volume -->
<svg class="a" style="left:805px;top:738px" width="30" height="26" viewBox="0 0 30 26">
 <path d="M1 8h5l7-6.5v23l-7-6.5h-5z" fill="#353535"/>
 <path d="M16 9q2.5 4 0 8" fill="none" stroke="#353535" stroke-width="2.5"/>
 <path d="M19.5 5.5q4.5 7.5 0 15" fill="none" stroke="#353535" stroke-width="2.5"/>
 <path d="M23.5 2q6.5 11 0 22" fill="none" stroke="#9a9a9a" stroke-width="2.5"/>
</svg>
<div class="a" style="left:837px;top:737px;width:74px;height:28px;border:1px solid #b8b8b6;background:#e4e4e3"></div>
<svg class="a" style="left:839px;top:740px" width="21" height="21" viewBox="0 0 21 21">
 <path d="M1.5 19.5l5.5-5.5M14 7l5.5-5.5" stroke="#2e3436" stroke-width="2"/>
 <path d="M5.5 12.5l4-4 3 3-4 4z" fill="#2e3436"/><path d="M9.5 8.5l2.5-2.5 3 3-2.5 2.5z" fill="#2e3436"/>
</svg>
<svg class="a" style="left:865px;top:741px" width="17" height="20" viewBox="0 0 17 20">
 <path d="M0.5 19.5V8.5a8 8 0 0 1 16 0v11l-2.7-2.5-2.7 2.5-2.6-2.5-2.6 2.5-2.7-2.5z" fill="#e8453c"/>
 <circle cx="5.5" cy="8.5" r="2" fill="#fff"/><circle cx="11.5" cy="8.5" r="2" fill="#fff"/>
 <circle cx="6" cy="8.8" r="0.9" fill="#333"/><circle cx="12" cy="8.8" r="0.9" fill="#333"/>
</svg>
<svg class="a" style="left:888px;top:741px" width="20" height="20" viewBox="0 0 20 20">
 <rect x="0" y="0" width="20" height="20" rx="2" fill="#2a2a2a"/>
 <path d="M0 0.5h20v3h-20z" fill="#e8e8e8"/><path d="M2 0.5h1.8l1.2 3h-1.8zM6.5 0.5h1.8l1.2 3h-1.8zM11 0.5h1.8l1.2 3h-1.8zM15.5 0.5h1.8l1.2 3h-1.8z" fill="#222"/>
 <path d="M10 5l5 13h-10z" fill="#f08a10"/><path d="M8.5 9.5h3l.8 2.3h-4.6zM7.2 14h5.6l.7 1.8h-7z" fill="#fff"/>
 <path d="M4 17.5h12v1.5h-12z" fill="#f08a10"/>
</svg>
<div class="t" style="left:920px;top:743px;font-size:14.3px;color:#2e3436">16:22</div>
<div class="t" style="left:972px;top:743px;font-size:14.3px;color:#2e3436;letter-spacing:0.4px">kprkpr</div>
<svg class="a" style="left:28px;top:761px" width="8" height="6"><path d="M0.8 0.5v6l1.6-1.6 1.6 1.6h2z" fill="#fff" stroke="#000" stroke-width="0.9"/></svg>
</div>
</body></html>
